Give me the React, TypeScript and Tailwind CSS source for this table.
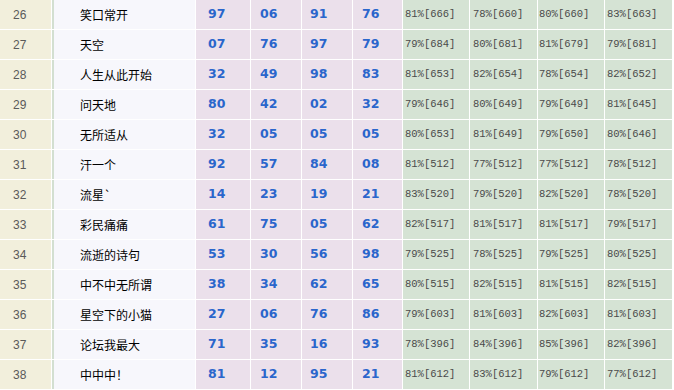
import React from 'react'

type Row = {
  no: number
  name: string
  nums: string[]
  pcts: string[]
}

const rows: Row[] = [
  { no: 26, name: '笑口常开', nums: ['97', '06', '91', '76'], pcts: ['81%[666]', '78%[660]', '80%[660]', '83%[663]'] },
  { no: 27, name: '天空', nums: ['07', '76', '97', '79'], pcts: ['79%[684]', '80%[681]', '81%[679]', '79%[681]'] },
  { no: 28, name: '人生从此开始', nums: ['32', '49', '98', '83'], pcts: ['81%[653]', '82%[654]', '78%[654]', '82%[652]'] },
  { no: 29, name: '问天地', nums: ['80', '42', '02', '32'], pcts: ['79%[646]', '80%[649]', '79%[649]', '81%[645]'] },
  { no: 30, name: '无所适从', nums: ['32', '05', '05', '05'], pcts: ['80%[653]', '81%[649]', '79%[650]', '80%[646]'] },
  { no: 31, name: '汗一个', nums: ['92', '57', '84', '08'], pcts: ['81%[512]', '77%[512]', '77%[512]', '78%[512]'] },
  { no: 32, name: '流星`', nums: ['14', '23', '19', '21'], pcts: ['83%[520]', '79%[520]', '82%[520]', '78%[520]'] },
  { no: 33, name: '彩民痛痛', nums: ['61', '75', '05', '62'], pcts: ['82%[517]', '81%[517]', '81%[517]', '79%[517]'] },
  { no: 34, name: '流逝的诗句', nums: ['53', '30', '56', '98'], pcts: ['79%[525]', '78%[525]', '79%[525]', '80%[525]'] },
  { no: 35, name: '中不中无所谓', nums: ['38', '34', '62', '65'], pcts: ['80%[515]', '82%[515]', '81%[515]', '82%[515]'] },
  { no: 36, name: '星空下的小猫', nums: ['27', '06', '76', '86'], pcts: ['79%[603]', '81%[603]', '82%[603]', '81%[603]'] },
  { no: 37, name: '论坛我最大', nums: ['71', '35', '16', '93'], pcts: ['78%[396]', '84%[396]', '85%[396]', '82%[396]'] },
  { no: 38, name: '中中中！', nums: ['81', '12', '95', '21'], pcts: ['81%[612]', '83%[612]', '79%[612]', '77%[612]'] },
]

const numPad = ['pl-[12px]', 'pl-[9px]', 'pl-[8px]', 'pl-[9px]']
const pctPad = ['pl-[2px]', 'pl-[3px]', 'pl-[1px]', 'pl-[2px]']

export default function App() {
  return (
    <div className="w-[674px] h-[390px] overflow-hidden bg-white">
      <div className="grid grid-cols-[51px_143px_54px_50px_50px_49px_66px_67px_66px_67px] auto-rows-[29px] gap-px">
        {rows.map((r) => (
          <React.Fragment key={r.no}>
            <div className="flex items-center pl-[13px] bg-[#f2efdc] text-[#5a5a5a] text-[12px] font-['Liberation_Sans',Arial,sans-serif]">
              {r.no}
            </div>
            <div className="flex items-center pl-[26px] bg-[#f7f7fc] border-l-2 border-[#d3dfd1] text-black text-[12px] font-['Noto_Sans_CJK_SC',sans-serif]">
              {r.name}
            </div>
            {r.nums.map((n, i) => (
              <div
                key={i}
                className={`flex items-center bg-[#ebe0eb] text-[#2a66cc] text-[12.5px] font-bold font-['DejaVu_Sans',Verdana,sans-serif] ${numPad[i]}`}
              >
                {n}
              </div>
            ))}
            {r.pcts.map((p, i) => (
              <div
                key={i}
                className={`flex items-center bg-[#d5e3d4] text-[#4a4a4a] text-[10.5px] font-['Liberation_Mono',monospace] ${pctPad[i]}`}
              >
                {p}
              </div>
            ))}
          </React.Fragment>
        ))}
      </div>
    </div>
  )
}
